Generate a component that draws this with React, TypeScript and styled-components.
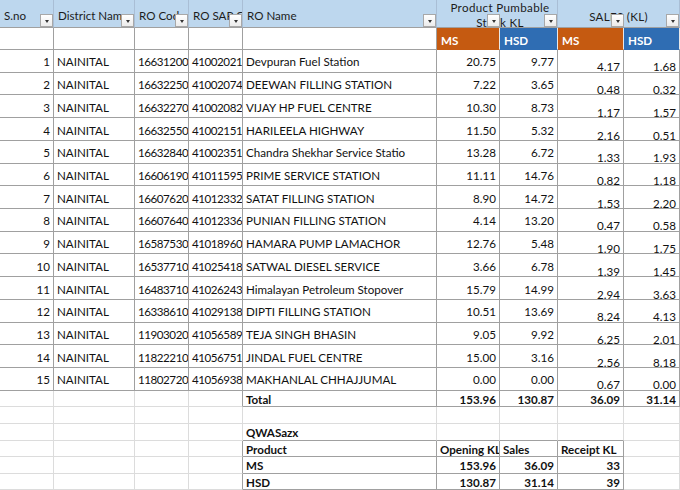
import React from "react";
import styled, { createGlobalStyle, css } from "styled-components";

const DARK = "#a0a0a0";
const LIGHT = "#dcdcdc";
const HEADSEP = "#a9bed5";
const ORANGE = "#c55a11";
const BLUE = "#2f6db3";

const GlobalStyle = createGlobalStyle`
  html, body { margin: 0; padding: 0; background: #fff; }
  body { font-family: Lato, "Liberation Sans", sans-serif; }
`;

const Sheet = styled.div`
  display: grid;
  grid-template-columns: 54px 81px 54px 54px 194px 63px 58px 66px 56px;
  grid-template-rows: 28px 22px repeat(15, 22.73px) 16px 17px 17px 16px 17px 16px;
  width: 680px;
  height: 490px;
  overflow: hidden;
  font-size: 11.6px;
  color: #111;
`;

type CellProps = {
  $r?: string;
  $b?: string;
  $span?: number;
  $bold?: boolean;
};

const Cell = styled.div<CellProps>`
  box-sizing: border-box;
  position: relative;
  display: flex;
  align-items: center;
  min-width: 0;
  padding: 2px 3px 0;
  white-space: nowrap;
  overflow: hidden;
  background: #fff;
  border-right: 1px solid ${(p) => p.$r ?? DARK};
  border-bottom: 1px solid ${(p) => p.$b ?? DARK};
  font-weight: ${(p) => (p.$bold ? 700 : 400)};
  ${(p) => p.$span && css`grid-column: span ${p.$span};`}
`;

const TextCell = styled(Cell)`
  justify-content: flex-start;
`;

const CodeCell = styled(Cell)`
  justify-content: flex-start;
  letter-spacing: -0.45px;
  padding-left: 3px;
  padding-right: 0;
`;

const NumCell = styled(Cell)`
  justify-content: flex-end;
`;

const SalesCell = styled(Cell)`
  justify-content: flex-end;
  padding-top: 12px;
`;

const HeadCell = styled(Cell)`
  background: #bdd7ee;
  border-right-color: ${HEADSEP};
  border-bottom-color: ${DARK};
  padding: 3px 4px 0;
  color: #1c1c1c;
`;

const MergedHead = styled(HeadCell)`
  justify-content: center;
  align-items: flex-start;
  text-align: center;
  white-space: normal;
  line-height: 15px;
  letter-spacing: 0.35px;
  padding: 0 3px 0 9px;
`;

const CenterHead = styled(HeadCell)`
  justify-content: center;
  padding-top: 5px;
  letter-spacing: 0.3px;
`;

const ToneCell = styled(Cell)<{ $tone: "ms" | "hsd" }>`
  background: ${(p) => (p.$tone === "ms" ? ORANGE : BLUE)};
  color: #fff;
  font-weight: 700;
  padding-left: 4px;
  padding-top: 3px;
  border-right-color: #e8e8e8;
  border-bottom-color: transparent;
`;

const Label = styled.span`
  position: relative;
  z-index: 0;
`;

const FilterButton = styled.span<{ $right: number }>`
  position: absolute;
  z-index: 2;
  right: ${(p) => p.$right}px;
  bottom: 0;
  width: 13px;
  height: 13px;
  box-sizing: border-box;
  border: 1px solid #a8a8a8;
  background: linear-gradient(#ffffff, #ececec);
  display: flex;
  align-items: center;
  justify-content: center;
  &::after {
    content: "";
    margin-top: 2px;
    border-left: 2.5px solid transparent;
    border-right: 2.5px solid transparent;
    border-top: 3px solid #333;
  }
`;

type Row = [number, string, string, string, string, string, string, string];

const rows: Row[] = [
  [1, "16631200", "41002021", "Devpuran Fuel Station", "20.75", "9.77", "4.17", "1.68"],
  [2, "16632250", "41002074", "DEEWAN FILLING STATION", "7.22", "3.65", "0.48", "0.32"],
  [3, "16632270", "41002082", "VIJAY HP FUEL CENTRE", "10.30", "8.73", "1.17", "1.57"],
  [4, "16632550", "41002151", "HARILEELA HIGHWAY", "11.50", "5.32", "2.16", "0.51"],
  [5, "16632840", "41002351", "Chandra Shekhar Service Statio", "13.28", "6.72", "1.33", "1.93"],
  [6, "16606190", "41011595", "PRIME SERVICE STATION", "11.11", "14.76", "0.82", "1.18"],
  [7, "16607620", "41012332", "SATAT FILLING STATION", "8.90", "14.72", "1.53", "2.20"],
  [8, "16607640", "41012336", "PUNIAN FILLING STATION", "4.14", "13.20", "0.47", "0.58"],
  [9, "16587530", "41018960", "HAMARA PUMP LAMACHOR", "12.76", "5.48", "1.90", "1.75"],
  [10, "16537710", "41025418", "SATWAL DIESEL SERVICE", "3.66", "6.78", "1.39", "1.45"],
  [11, "16483710", "41026243", "Himalayan Petroleum Stopover", "15.79", "14.99", "2.94", "3.63"],
  [12, "16338610", "41029138", "DIPTI FILLING STATION", "10.51", "13.69", "8.24", "4.13"],
  [13, "11903020", "41056589", "TEJA SINGH BHASIN", "9.05", "9.92", "6.25", "2.01"],
  [14, "11822210", "41056751", "JINDAL FUEL CENTRE", "15.00", "3.16", "2.56", "8.18"],
  [15, "11802720", "41056938", "MAKHANLAL CHHAJJUMAL", "0.00", "0.00", "0.67", "0.00"],
];

const summary = [
  { product: "MS", opening: "153.96", sales: "36.09", receipt: "33" },
  { product: "HSD", opening: "130.87", sales: "31.14", receipt: "39" },
];

function BlankLeft({ lastDark }: { lastDark?: boolean }) {
  return (
    <>
      <Cell $r={LIGHT} $b={LIGHT} />
      <Cell $r={LIGHT} $b={LIGHT} />
      <Cell $r={LIGHT} $b={LIGHT} />
      <Cell $r={lastDark ? DARK : LIGHT} $b={LIGHT} />
    </>
  );
}

export default function App() {
  return (
    <>
      <GlobalStyle />
      <Sheet>
        {/* header row */}
        <HeadCell>
          <Label>S.no</Label>
          <FilterButton $right={0} />
        </HeadCell>
        <HeadCell>
          <Label>District Name</Label>
          <FilterButton $right={0} />
        </HeadCell>
        <HeadCell>
          <Label>RO Code</Label>
          <FilterButton $right={0} />
        </HeadCell>
        <HeadCell>
          <Label>RO SAP Code</Label>
          <FilterButton $right={0} />
        </HeadCell>
        <HeadCell>
          <Label>RO Name</Label>
          <FilterButton $right={0} />
        </HeadCell>
        <MergedHead $span={2}>
          <Label>Product Pumbable Stock KL</Label>
          <FilterButton $right={57} />
          <FilterButton $right={0} />
        </MergedHead>
        <CenterHead $span={2}>
          <Label>SALES (KL)</Label>
          <FilterButton $right={55} />
          <FilterButton $right={0} />
        </CenterHead>

        {/* sub header row */}
        <Cell />
        <Cell />
        <Cell />
        <Cell />
        <Cell />
        <ToneCell $tone="ms">MS</ToneCell>
        <ToneCell $tone="hsd">HSD</ToneCell>
        <ToneCell $tone="ms">MS</ToneCell>
        <ToneCell $tone="hsd">HSD</ToneCell>

        {/* data rows */}
        {rows.map(([no, code, sap, name, ms, hsd, sms, shsd]) => (
          <React.Fragment key={no}>
            <NumCell>{no}</NumCell>
            <TextCell>NAINITAL</TextCell>
            <CodeCell>{code}</CodeCell>
            <CodeCell>{sap}</CodeCell>
            <TextCell>{name}</TextCell>
            <NumCell>{ms}</NumCell>
            <NumCell>{hsd}</NumCell>
            <SalesCell>{sms}</SalesCell>
            <SalesCell>{shsd}</SalesCell>
          </React.Fragment>
        ))}

        {/* total row */}
        <BlankLeft lastDark />
        <TextCell $bold>Total</TextCell>
        <NumCell $bold>153.96</NumCell>
        <NumCell $bold>130.87</NumCell>
        <NumCell $bold>36.09</NumCell>
        <NumCell $bold>31.14</NumCell>

        {/* blank row */}
        <BlankLeft />
        <Cell $r={LIGHT} $b={LIGHT} />
        <Cell $r={LIGHT} $b={LIGHT} />
        <Cell $r={LIGHT} $b={LIGHT} />
        <Cell $r={LIGHT} $b={LIGHT} />
        <Cell $r={LIGHT} $b={LIGHT} />

        {/* title row */}
        <BlankLeft />
        <TextCell $bold $r={LIGHT}>QWASazx</TextCell>
        <Cell $r={LIGHT} />
        <Cell $r={LIGHT} />
        <Cell $r={LIGHT} />
        <Cell $r={LIGHT} $b={LIGHT} />

        {/* summary header */}
        <BlankLeft lastDark />
        <TextCell $bold>Product</TextCell>
        <TextCell $bold>Opening KL</TextCell>
        <TextCell $bold>Sales</TextCell>
        <TextCell $bold>Receipt KL</TextCell>
        <Cell $r={LIGHT} $b={LIGHT} />

        {summary.map((s) => (
          <React.Fragment key={s.product}>
            <BlankLeft lastDark />
            <TextCell $bold>{s.product}</TextCell>
            <NumCell $bold>{s.opening}</NumCell>
            <NumCell $bold>{s.sales}</NumCell>
            <NumCell $bold>{s.receipt}</NumCell>
            <Cell $r={LIGHT} $b={LIGHT} />
          </React.Fragment>
        ))}
      </Sheet>
    </>
  );
}
